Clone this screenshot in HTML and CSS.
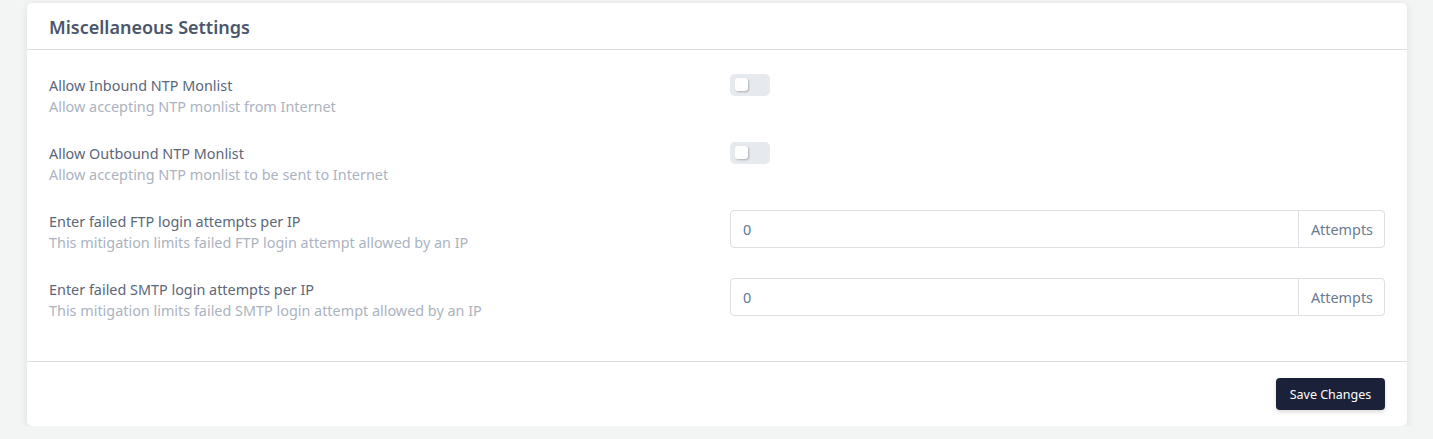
FILE: index.html
```html
<!DOCTYPE html>
<html>
<head>
<meta charset="utf-8">
<link rel="stylesheet" href="styles.css">
</head>
<body>
<div class="card">
  <div class="card-header"><h2 class="title">Miscellaneous Settings</h2></div>
  <div class="card-body">
    <div class="row">
      <div class="info">
        <div class="label">Allow Inbound NTP Monlist</div>
        <div class="desc">Allow accepting NTP monlist from Internet</div>
      </div>
      <div class="control"><span class="toggle"><span class="knob"></span></span></div>
    </div>
    <div class="row">
      <div class="info">
        <div class="label">Allow Outbound NTP Monlist</div>
        <div class="desc">Allow accepting NTP monlist to be sent to Internet</div>
      </div>
      <div class="control"><span class="toggle"><span class="knob"></span></span></div>
    </div>
    <div class="row">
      <div class="info">
        <div class="label">Enter failed FTP login attempts per IP</div>
        <div class="desc">This mitigation limits failed FTP login attempt allowed by an IP</div>
      </div>
      <div class="control">
        <div class="input-group"><span class="input">0</span><span class="addon">Attempts</span></div>
      </div>
    </div>
    <div class="row">
      <div class="info">
        <div class="label">Enter failed SMTP login attempts per IP</div>
        <div class="desc">This mitigation limits failed SMTP login attempt allowed by an IP</div>
      </div>
      <div class="control">
        <div class="input-group"><span class="input">0</span><span class="addon">Attempts</span></div>
      </div>
    </div>
  </div>
  <div class="card-footer"><button class="btn">Save Changes</button></div>
</div>
</body>
</html>
```

FILE: styles.css
```css
html, body { margin: 0; padding: 0; }
body {
  background: #f3f4f4;
  font-family: "Noto Sans", "Liberation Sans", sans-serif;
  padding: 3px 26px 0 27px;
}
.card {
  background: #fff;
  border-radius: 5px;
  box-shadow: 0 2px 8px rgba(30, 40, 60, 0.10);
}
.card-header {
  height: 46px;
  display: flex;
  align-items: center;
  padding: 0 22px;
  border-bottom: 1px solid #dadde1;
}
.title {
  margin: 0;
  padding-top: 2px;
  font-size: 18px;
  font-weight: 600;
  color: #4a566a;
}
.card-body {
  padding: 25px 22px 14px;
}
.row {
  display: grid;
  grid-template-columns: 681px 1fr;
  margin-bottom: 26px;
  min-height: 42px;
}
.label {
  font-size: 14.4px;
  line-height: 21px;
  color: #5b677a;
}
.desc {
  font-size: 14.4px;
  line-height: 21px;
  color: #abb3bf;
}
.control { display: flex; align-items: flex-start; }
.toggle {
  position: relative;
  display: block;
  width: 40px;
  height: 22px;
  margin-top: -1px;
  border-radius: 5px;
  background: #e6e9ed;
}
.knob {
  position: absolute;
  left: 5px;
  top: 4px;
  width: 13px;
  height: 13px;
  border-radius: 3px;
  background: #fff;
  box-shadow: 1px 1px 2px rgba(0, 0, 0, 0.25);
}
.input-group {
  display: flex;
  width: 100%;
  height: 38px;
  margin-top: -1px;
  border: 1px solid #dcdfe3;
  border-radius: 4px;
  box-sizing: border-box;
}
.input {
  flex: 1;
  display: flex;
  align-items: center;
  padding-left: 12px;
  font-size: 14.4px;
  color: #5f7894;
}
.addon {
  display: flex;
  align-items: center;
  padding: 0 11px 0 12px;
  border-left: 1px solid #dcdfe3;
  font-size: 14.4px;
  color: #6b7a8f;
}
.card-footer {
  border-top: 1px solid #dadde1;
  padding: 16px 22px;
  display: flex;
  justify-content: flex-end;
}
.btn {
  height: 32px;
  width: 109px;
  border: none;
  border-radius: 4px;
  background: #1a2139;
  color: #fff;
  font-family: inherit;
  font-size: 12.5px;
  padding: 0;
  box-shadow: 0 2px 4px rgba(0, 0, 0, 0.15);
}
```
